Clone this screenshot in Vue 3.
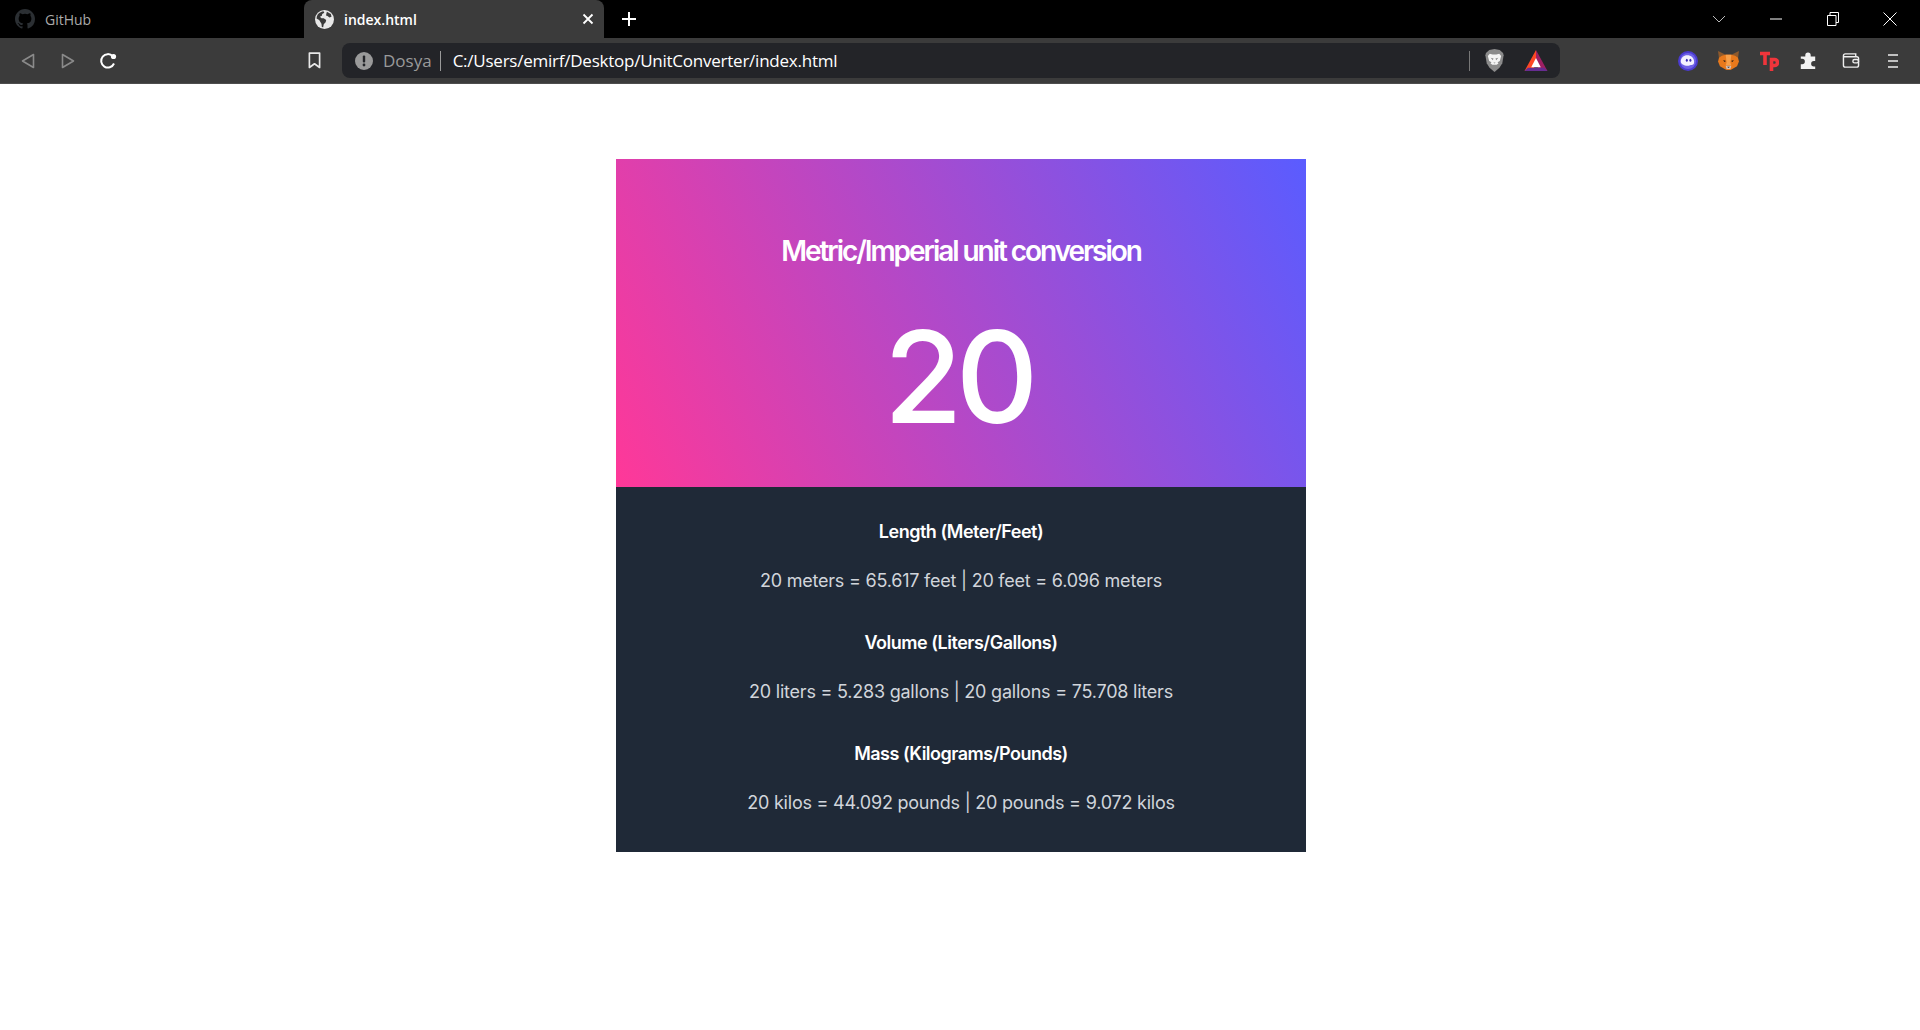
<script setup>
const conversions = [
  { title: "Length (Meter/Feet)", left: "20 meters = 65.617 feet", right: "20 feet = 6.096 meters" },
  { title: "Volume (Liters/Gallons)", left: "20 liters = 5.283 gallons", right: "20 gallons = 75.708 liters" },
  { title: "Mass (Kilograms/Pounds)", left: "20 kilos = 44.092 pounds", right: "20 pounds = 9.072 kilos" },
];
</script>

<template>
  <div class="browser">
    <div class="tabstrip">
      <div class="tab">
        <svg class="favicon" viewBox="0 0 16 16" width="20" height="20">
          <path fill="#2b2f33" d="M8 0C3.58 0 0 3.58 0 8c0 3.54 2.29 6.53 5.47 7.59.4.07.55-.17.55-.38v-1.34c-2.23.48-2.7-1.07-2.7-1.07-.36-.92-.89-1.17-.89-1.17-.73-.5.05-.49.05-.49.8.06 1.23.82 1.23.82.71 1.22 1.87.87 2.33.66.07-.52.28-.87.51-1.07-1.78-.2-3.64-.89-3.64-3.95 0-.87.31-1.59.82-2.15-.08-.2-.36-1.02.08-2.12 0 0 .67-.21 2.2.82a7.6 7.6 0 0 1 4 0c1.53-1.04 2.2-.82 2.2-.82.44 1.1.16 1.92.08 2.12.51.56.82 1.27.82 2.15 0 3.07-1.87 3.75-3.65 3.95.29.25.54.73.54 1.48v2.2c0 .21.15.46.55.38A8 8 0 0 0 16 8c0-4.42-3.58-8-8-8z" />
        </svg>
        <span class="tab-label">GitHub</span>
      </div>
      <div class="tab active">
        <svg class="favicon" viewBox="0 0 20 20" width="19" height="19">
          <circle cx="10" cy="10" r="10" fill="#e8e8e8" />
          <path fill="#3b3b3b" d="M3 4.500c2-2 4-3 6-3.200l.8 1.500-2.200 1.500-.4 1.700-2 1 1.600 1.600 2.400.2 2.600 1.600-.6 2.400-2 2.200-.6 3.200-1.400-.4-.4-3.200L4.400 10.600 1.600 9c.1-1.700.5-3.200 1.400-4.500zM12.500 1.800l4.200 2.400.7 3-2.200.6-2-1.600-1.600-.4.4-2.200z" />
        </svg>
        <span class="tab-label">index.html</span>
        <svg class="tab-close" viewBox="0 0 12 12" width="12" height="12">
          <path d="M1.500 1.500l9 9M10.500 1.500l-9 9" stroke="#fff" stroke-width="1.800" />
        </svg>
      </div>
      <svg class="new-tab" viewBox="0 0 16 16" width="16" height="16">
        <path d="M8 1v14M1 8h14" stroke="#fff" stroke-width="2" />
      </svg>
      <div class="window-buttons">
        <svg viewBox="0 0 14 8" width="14" height="8"><path d="M1 1l6 6 6-6" fill="none" stroke="#bbb" /></svg>
        <svg viewBox="0 0 12 2" width="12" height="2"><path d="M0 1h12" stroke="#fff" /></svg>
        <svg viewBox="0 0 12 14" width="12" height="14">
          <path d="M.5 3.500h8.500v10H.5zM3 3.500V.5h8.500v10H9" fill="none" stroke="#fff" />
        </svg>
        <svg viewBox="0 0 14 14" width="14" height="14"><path d="M.5.5l13 13M13.500.5l-13 13" stroke="#fff" /></svg>
      </div>
    </div>

    <div class="toolbar">
      <svg class="nav-back" viewBox="0 0 14 16" width="14" height="16">
        <path d="M12.500 1.500v13L1.500 8z" fill="none" stroke="#8a8a8a" stroke-width="1.600" stroke-linejoin="round" />
      </svg>
      <svg class="nav-forward" viewBox="0 0 14 16" width="14" height="16">
        <path d="M1.500 1.500v13L12.500 8z" fill="none" stroke="#8a8a8a" stroke-width="1.600" stroke-linejoin="round" />
      </svg>
      <svg class="nav-reload" viewBox="0 0 18 18" width="18" height="18">
        <path d="M15 11.500A6.700 6.700 0 1 1 13.800 4.300" fill="none" stroke="#fff" stroke-width="2" />
        <circle cx="14.500" cy="4.500" r="2.600" fill="#fff" />
      </svg>
      <svg class="bookmark" viewBox="0 0 14 18" width="13" height="17">
        <path d="M1.500 1h11v15.500L7 12.500l-5.500 4z" fill="none" stroke="#e8e8e8" stroke-width="1.800" stroke-linejoin="round" />
      </svg>

      <div class="address">
        <svg viewBox="0 0 18 18" width="18" height="18">
          <circle cx="9" cy="9" r="9" fill="#9a9a9a" />
          <rect x="7.800" y="3.500" width="2.400" height="7" rx="1" fill="#232428" />
          <circle cx="9" cy="13" r="1.400" fill="#232428" />
        </svg>
        <span class="scheme">Dosya</span>
        <span class="address-sep"></span>
        <span class="url">C:/Users/emirf/Desktop/UnitConverter/index.html</span>
        <span class="address-end"></span>
        <svg class="lion" viewBox="0 0 20 24" width="19" height="23">
          <path fill="#8b8b8b" d="M4.500 1L10 0l5.500 1L19 4l.6 2.500-1.400 8.500-3 4.500L10 24l-5.200-4.500-3-4.500L.4 6.500 1 4z" />
          <path fill="#f4f4f4" d="M5 5l3 .8h4L15 5l2 2.200-1.400 5.300-2.400 1.300 1 1.400-2 1.200H7.800l-2-1.200 1-1.400-2.400-1.300L3 7.200z" />
          <path fill="#8b8b8b" d="M6 9l3 1-.8 1.800zM14 9l-3 1 .8 1.800zM8.800 14h2.400L10 15.200z" />
        </svg>
        <svg class="bat" viewBox="0 0 24 22" width="24" height="21">
          <path fill="#ff4724" d="M12 0L0 22h8l4-7z" />
          <path fill="#9e1f63" d="M12 0l12 22h-8l-4-7z" />
          <path fill="#662d91" d="M0 22l3.500-3.500h17L24 22z" />
          <path fill="#fff" d="M12 8.500l5 9.500H7z" />
        </svg>
      </div>

      <div class="extensions">
        <svg viewBox="0 0 20 20" width="20" height="20">
          <circle cx="10" cy="10" r="10" fill="#4b3bd1" />
          <circle cx="10" cy="10" r="8" fill="#6f62e6" />
          <path fill="#f4f2ff" d="M2.800 10.500c0-3.700 2.800-6.300 6.500-6.300s6.800 2.600 6.800 6.300c.2 2.800-1.400 3.700-3 3.500-1.200-.2-2 .9-3.600.8-3.400-.2-6.700-1.500-6.700-4.300z" />
          <ellipse cx="8.800" cy="9.200" rx="1" ry="1.500" fill="#3a2db5" />
          <ellipse cx="12.400" cy="9.200" rx="1" ry="1.500" fill="#3a2db5" />
        </svg>
        <svg viewBox="0 0 22 20" width="21" height="19">
          <path fill="#8f5a2c" d="M0 0l8 4h6l8-4-1 8H1z" />
          <path fill="#e8791c" d="M1 7l3-2 4-1h6l4 1 3 2 1 4-2 5-5 3-2 1H9l-2-1-5-3-2-5z" />
          <path fill="#f7a04a" d="M8 4h6l-1 8 1 3H8l1-3z" />
          <path fill="#2f2118" d="M5.500 9.500l3 1-2 1.200zM16.500 9.500l-3 1 2 1.200z" />
          <path fill="#d7c1b3" d="M8 15.500h6l-1 3.500H9z" />
          <path fill="#233447" d="M9.500 16.500h3L11 18z" />
        </svg>
        <svg viewBox="0 0 20 20" width="20" height="20">
          <path fill="none" stroke="#f0353b" stroke-width="3.600" d="M1 2.500h10M6 2.500V14M12.500 20V8.500h3a3 3 0 0 1 0 6h-3" />
        </svg>
        <svg viewBox="0 0 20 20" width="18" height="18">
          <path fill="#f2f2f2" d="M7 3.500a3 3 0 0 1 6 0V5h5v5h-1.500a3 3 0 0 0 0 6H18v3H2v-5.500h1.500a3 3 0 0 0 0-6H2V5h5z" />
        </svg>
        <svg class="wallet" viewBox="0 0 20 18" width="20" height="17">
          <path d="M2 5V4a2 2 0 0 1 2-2h11v3M2 5h14a2 2 0 0 1 2 2v7a2 2 0 0 1-2 2H4a2 2 0 0 1-2-2z" fill="none" stroke="#eee" stroke-width="1.500" />
          <rect x="12" y="8" width="6" height="3.500" rx="1.700" fill="none" stroke="#eee" stroke-width="1.500" />
        </svg>
        <svg class="menu" viewBox="0 0 12 16" width="12" height="16">
          <path d="M1 2h10M1 8h10M1 14h10" stroke="#eee" stroke-width="1.600" />
        </svg>
      </div>
    </div>

    <main class="page">
      <section class="card">
        <div class="hero">
          <h1>Metric/Imperial unit conversion</h1>
          <div class="value">20</div>
        </div>
        <div class="results">
          <div v-for="item in conversions" :key="item.title" class="result">
            <h2>{{ item.title }}</h2>
            <p>{{ item.left }} | {{ item.right }}</p>
          </div>
        </div>
      </section>
    </main>
  </div>
</template>

<style>
html,
body {
  margin: 0;
  background: #fff;
}
</style>

<style scoped>
.browser {
  height: 1030px;
  display: flex;
  flex-direction: column;
  overflow: hidden;
  font-family: "Open Sans", "Liberation Sans", sans-serif;
}

.tabstrip {
  height: 38px;
  flex: none;
  display: flex;
  align-items: center;
  background: #000;
}

.tab {
  width: 304px;
  height: 38px;
  box-sizing: border-box;
  padding: 0 15px;
  display: flex;
  align-items: center;
  gap: 10px;
  color: #aaa;
  font-size: 14px;
}

.tab.active {
  width: 300px;
  padding: 0 10px 0 11px;
  border-radius: 8px 8px 0 0;
  background: #3b3b3b;
  color: #fff;
  font-weight: 600;
}

.favicon {
  flex: none;
}

.tab-close {
  margin-left: auto;
}

.new-tab {
  margin-left: 17px;
}

.window-buttons {
  margin-left: auto;
  padding-right: 2px;
  display: grid;
  grid-template-columns: repeat(4, 57px);
  justify-items: center;
  align-items: center;
}

.toolbar {
  height: 45px;
  flex: none;
  display: flex;
  align-items: center;
  border-bottom: 1px solid #4d4d4d;
  background: #3b3b3b;
}

.nav-back {
  margin-left: 21px;
}

.nav-forward {
  margin-left: 26px;
}

.nav-reload {
  margin-left: 24px;
}

.bookmark {
  margin-left: 191px;
}

.address {
  width: 1218px;
  height: 35px;
  margin-left: 21px;
  box-sizing: border-box;
  padding: 0 12px 0 13px;
  display: flex;
  align-items: center;
  border-radius: 8px;
  background: #232428;
  font-size: 17px;
}

.scheme {
  margin-left: 10px;
  color: #9a9a9a;
}

.address-sep {
  width: 1px;
  height: 20px;
  margin: 0 12px 0 8px;
  background: #9a9a9a;
}

.url {
  color: #fff;
  letter-spacing: -0.24px;
}

.address-end {
  width: 1px;
  height: 20px;
  margin-left: auto;
  background: #777;
}

.lion {
  margin-left: 15px;
}

.bat {
  margin-left: 20px;
}

.extensions {
  margin-left: 118px;
  display: flex;
  align-items: center;
  gap: 20px;
}

.wallet {
  margin-left: 4px;
}

.menu {
  margin-left: 6px;
}

.page {
  flex: 1;
  box-sizing: border-box;
  padding: 75px 0 0 2px;
}

.card {
  width: 690px;
  margin: 0 auto;
  font-family: Inter, "Liberation Sans", sans-serif;
  text-align: center;
}

.hero {
  height: 328px;
  box-sizing: border-box;
  padding-top: 74px;
  background: linear-gradient(65deg, #ff3898, #5a5cff);
  color: #fff;
}

.hero h1 {
  margin: 0;
  font-size: 28px;
  line-height: 36px;
  font-weight: 600;
  letter-spacing: -2.05px;
}

.value {
  margin-top: 44px;
  padding-right: 7px;
  font-size: 128px;
  line-height: 128px;
  font-weight: 500;
  letter-spacing: -7px;
}

.results {
  height: 365px;
  box-sizing: border-box;
  padding-top: 31px;
  background: #1f2937;
}

.result {
  margin-bottom: 34px;
}

.result h2 {
  margin: 0 0 21px;
  font-size: 18px;
  line-height: 28px;
  font-weight: 600;
  letter-spacing: -0.5px;
  color: #fff;
}

.result p {
  margin: 0;
  font-size: 18px;
  line-height: 28px;
  letter-spacing: -0.22px;
  color: #d1d5db;
}
</style>
